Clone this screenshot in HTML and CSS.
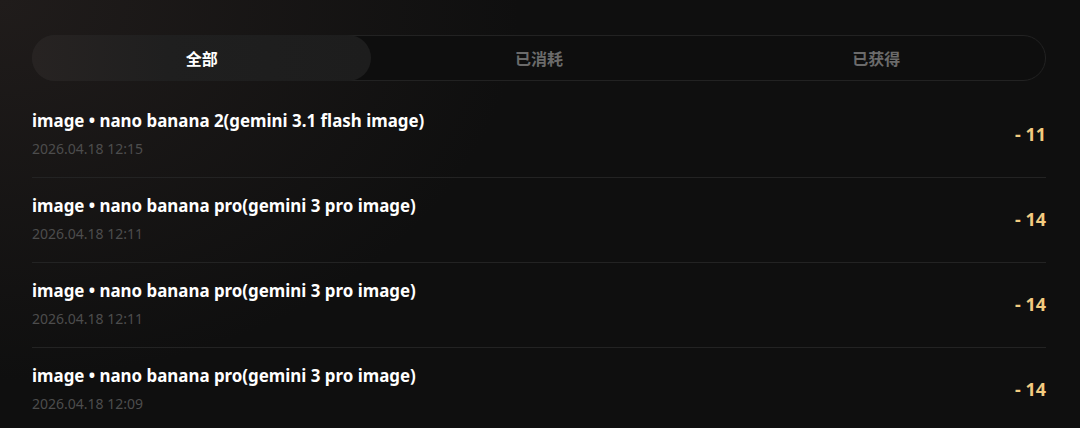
FILE: index.html
```html
<!DOCTYPE html>
<html lang="zh">
<head>
<meta charset="utf-8">
<link rel="stylesheet" href="styles.css">
</head>
<body>
<div class="page">
  <div class="tabs">
    <div class="tab active">全部</div>
    <div class="tab">已消耗</div>
    <div class="tab">已获得</div>
  </div>
  <ul class="list">
    <li class="row">
      <div class="info">
        <div class="title">image • nano banana 2(gemini 3.1 flash image)</div>
        <div class="date">2026.04.18 12:15</div>
      </div>
      <div class="amount">- 11</div>
    </li>
    <li class="row">
      <div class="info">
        <div class="title">image • nano banana pro(gemini 3 pro image)</div>
        <div class="date">2026.04.18 12:11</div>
      </div>
      <div class="amount">- 14</div>
    </li>
    <li class="row">
      <div class="info">
        <div class="title">image • nano banana pro(gemini 3 pro image)</div>
        <div class="date">2026.04.18 12:11</div>
      </div>
      <div class="amount">- 14</div>
    </li>
    <li class="row">
      <div class="info">
        <div class="title">image • nano banana pro(gemini 3 pro image)</div>
        <div class="date">2026.04.18 12:09</div>
      </div>
      <div class="amount">- 14</div>
    </li>
  </ul>
</div>
</body>
</html>
```

FILE: styles.css
```css
html, body {
  margin: 0;
  padding: 0;
  height: 100%;
  overflow: hidden;
}
body {
  background: radial-gradient(ellipse 520px 380px at 0 0, #201c1b 0%, rgba(32,28,27,0) 100%), #0f0f0f;
  font-family: "Noto Sans", "Noto Sans CJK SC", sans-serif;
  color: #fff;
}
.page {
  padding: 35px 34px 0 32px;
}
.tabs {
  display: grid;
  grid-template-columns: repeat(3, 1fr);
  height: 46px;
  box-sizing: border-box;
  border: 1px solid #222;
  border-radius: 23px;
  background: #0e0e0e;
}
.tab {
  display: flex;
  align-items: center;
  justify-content: center;
  margin: -1px;
  border-radius: 23px;
  font-family: "Noto Sans CJK SC", sans-serif;
  font-weight: 700;
  font-size: 16px;
  color: #6b6b6b;
}
.tab.active {
  background: linear-gradient(90deg, #272322 0%, #1f1f1f 40%, #1d1d1d 100%);
  color: #fff;
}
.list {
  list-style: none;
  margin: 12px 0 0;
  padding: 0;
}
.row {
  display: flex;
  align-items: center;
  justify-content: space-between;
  padding: 17px 0 19px;
  border-bottom: 1px solid #232323;
}
.title {
  font-weight: 700;
  font-size: 16.9px;
  line-height: 22px;
  color: #fff;
}
.date {
  margin-top: 8px;
  font-size: 14px;
  line-height: 18px;
  color: #4d4d4d;
}
.amount {
  font-weight: 700;
  font-size: 18px;
  color: #f2cb80;
}
```
